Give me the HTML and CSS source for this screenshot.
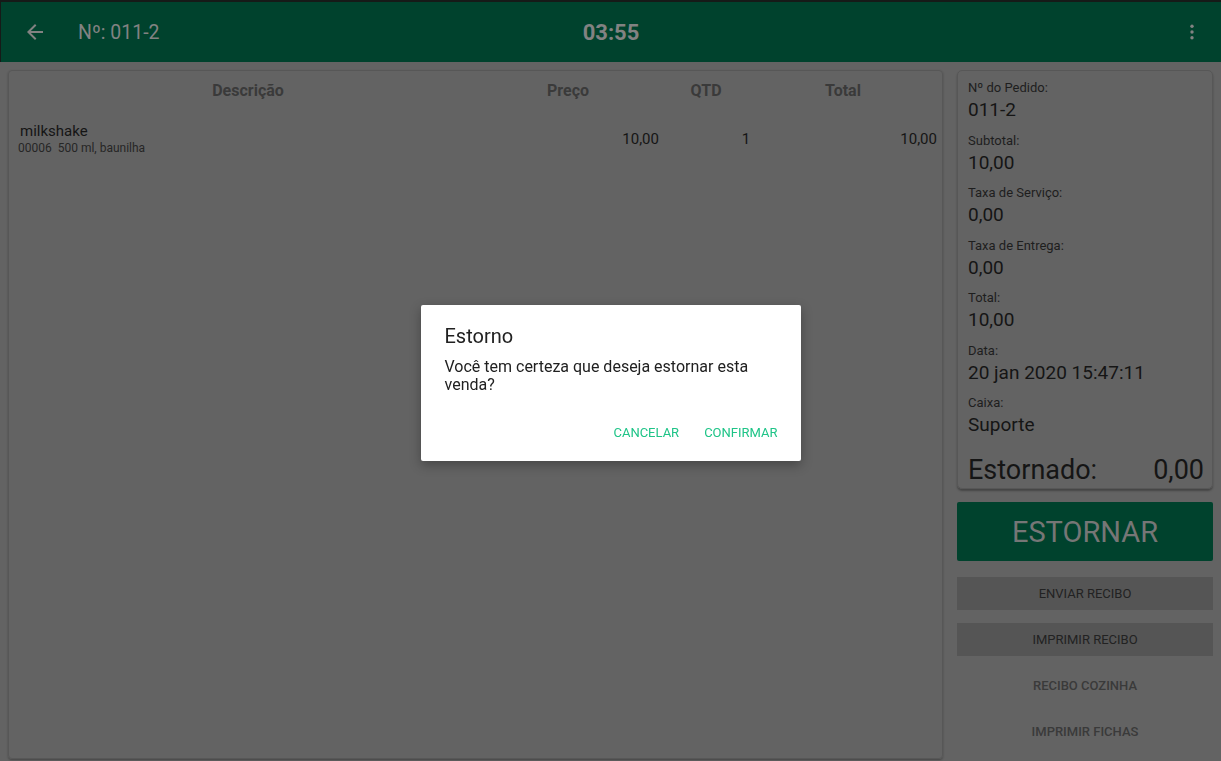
FILE: index.html
```html
<!DOCTYPE html>
<html lang="pt-BR">

<head>
  <meta charset="UTF-8">
  <meta name="viewport" content="width=device-width, initial-scale=1.0">
  <title>Pedido 011-2</title>
  <link rel="stylesheet" href="styles.css">
</head>

<body>
  <header class="topbar">
    <div class="topbar_left">
      <svg class="back_icon" width="24" height="24" viewBox="0 0 24 24">
        <path d="M20 11H7.83l5.59-5.59L12 4l-8 8 8 8 1.41-1.41L7.83 13H20v-2z" />
      </svg>
      <div class="order_title">Nº: 011-2</div>
    </div>
    <div class="timer">03:55</div>
    <div class="topbar_right">
      <svg class="menu_icon" width="24" height="24" viewBox="0 0 24 24">
        <circle cx="12" cy="6.3" r="1.7" />
        <circle cx="12" cy="12" r="1.7" />
        <circle cx="12" cy="17.7" r="1.7" />
      </svg>
    </div>
  </header>

  <main class="content">
    <section class="items_card">
      <div class="items_head">
        <div>Descrição</div>
        <div>Preço</div>
        <div>QTD</div>
        <div>Total</div>
      </div>
      <div class="item_row">
        <div class="item_desc">
          <div class="item_name">milkshake</div>
          <div class="item_info">00006&nbsp; 500 ml, baunilha</div>
        </div>
        <div class="item_price">10,00</div>
        <div class="item_qtd">1</div>
        <div class="item_total">10,00</div>
      </div>
    </section>

    <aside class="side">
      <div class="summary_card">
        <div class="field">
          <div class="field_label">Nº do Pedido:</div>
          <div class="field_value">011-2</div>
        </div>
        <div class="field">
          <div class="field_label">Subtotal:</div>
          <div class="field_value">10,00</div>
        </div>
        <div class="field">
          <div class="field_label">Taxa de Serviço:</div>
          <div class="field_value">0,00</div>
        </div>
        <div class="field">
          <div class="field_label">Taxa de Entrega:</div>
          <div class="field_value">0,00</div>
        </div>
        <div class="field">
          <div class="field_label">Total:</div>
          <div class="field_value">10,00</div>
        </div>
        <div class="field">
          <div class="field_label">Data:</div>
          <div class="field_value">20 jan 2020 15:47:11</div>
        </div>
        <div class="field">
          <div class="field_label">Caixa:</div>
          <div class="field_value">Suporte</div>
        </div>
        <div class="refunded">
          <span>Estornado:</span>
          <span>0,00</span>
        </div>
      </div>

      <button type="button" class="refund_btn">ESTORNAR</button>
      <button type="button" class="action_btn">ENVIAR RECIBO</button>
      <button type="button" class="action_btn">IMPRIMIR RECIBO</button>
      <button type="button" class="action_btn flat">RECIBO COZINHA</button>
      <button type="button" class="action_btn flat">IMPRIMIR FICHAS</button>
    </aside>
  </main>

  <div class="overlay">
    <div class="dialog">
      <div class="dialog_title">Estorno</div>
      <div class="dialog_text">Você tem certeza que deseja estornar esta venda?</div>
      <div class="dialog_btns">
        <button type="button" class="dialog_btn">CANCELAR</button>
        <button type="button" class="dialog_btn">CONFIRMAR</button>
      </div>
    </div>
  </div>
</body>

</html>
```

FILE: styles.css
```css
* {
  box-sizing: border-box;
}

body {
  width: 1221px;
  height: 761px;
  margin: 0;
  overflow: hidden;

  font-family: Roboto, "Noto Sans", sans-serif;
  background-color: #636363;
}

button {
  font-family: inherit;
  border: none;
  cursor: pointer;
}

/* top bar */
.topbar {
  height: 62px;

  display: grid;
  grid-template-columns: 1fr auto 1fr;
  align-items: center;

  background-color: #00422d;
  border-top: 2px solid #161a18;
  border-left: 1px solid #161a18;
}

.topbar_left {
  display: flex;
  align-items: center;
  padding-left: 22px;
}

.back_icon {
  fill: #828282;
}

.order_title {
  margin-left: 31px;
  font-size: 19.5px;
  color: #828282;
}

.timer {
  font-size: 22px;
  font-weight: 700;
  color: #828282;
}

.topbar_right {
  display: flex;
  justify-content: flex-end;
  padding-right: 17px;
}

.menu_icon {
  fill: #828282;
}

/* page body */
.content {
  height: 699px;

  display: flex;
  gap: 14px;
  padding: 8px 8px 0 8px;
}

.items_card {
  flex: 1;
  height: 689px;

  border: 1px solid #575757;
  border-radius: 4px;
  box-shadow: 0 1px 2px rgba(0, 0, 0, 0.3);
}

.items_head {
  height: 38px;

  display: grid;
  grid-template-columns: 478px 162px 114px 160px;
  align-items: center;
  text-align: center;

  font-size: 16px;
  font-weight: 700;
  color: #3a3a3a;
}

.item_row {
  height: 50px;
  margin-top: 5px;

  display: grid;
  grid-template-columns: 1fr 100px 174px 104px;
  align-items: center;

  padding: 0 5px 0 11px;
  font-size: 15px;
  color: #151515;
}

.item_name {
  line-height: 18px;
}

.item_info {
  margin-left: -2px;
  font-size: 12px;
  line-height: 16px;
  color: #262626;
}

.item_price,
.item_total {
  text-align: right;
}

.item_qtd {
  text-align: center;
}

/* right column */
.side {
  width: 256px;

  display: flex;
  flex-direction: column;
}

.summary_card {
  padding: 9px 10px 2px 10px;

  border: 1px solid #575757;
  border-radius: 5px;
  box-shadow: 0 2px 2px rgba(0, 0, 0, 0.3);
}

.field {
  margin-bottom: 10.5px;
}

.field_label {
  font-size: 13px;
  line-height: 16px;
  color: #1e1e1e;
}

.field_value {
  margin-top: 2px;
  font-size: 19px;
  line-height: 24px;
  color: #151515;
}

/* margin collapses with the last field's margin-bottom */
.refunded {
  display: flex;
  justify-content: space-between;

  margin-top: 17px;
  margin-right: -2px;
  font-size: 27px;
  line-height: 32px;
  color: #151515;
}

.refund_btn {
  height: 59px;
  margin-top: 13px;

  font-size: 29px;
  color: #767676;
  background-color: #00422d;
  border-radius: 2px;
}

.action_btn {
  height: 33px;
  margin-top: 13px;

  font-size: 13px;
  color: #222222;
  background-color: #555555;
}

.refund_btn + .action_btn {
  margin-top: 16px;
}

.flat {
  font-weight: 500;
  color: #3a3a3a;
  background-color: transparent;
}

/* confirm dialog */
.overlay {
  position: fixed;
  inset: 0;

  display: flex;
  justify-content: center;
  align-items: center;
  padding-top: 5px;
}

.dialog {
  width: 380px;
  padding: 19px 15px 11px 24px;

  background-color: white;
  border-radius: 2px;
  box-shadow: 0 4px 12px rgba(0, 0, 0, 0.3);
}

.dialog_title {
  font-size: 20px;
  line-height: 24px;
  color: #212121;
}

.dialog_text {
  margin-top: 10px;
  padding-right: 9px;

  font-size: 16px;
  line-height: 18px;
  color: #212121;
}

.dialog_btns {
  display: flex;
  justify-content: flex-end;
  gap: 9px;
  margin-top: 20px;
}

.dialog_btn {
  height: 36px;
  padding: 0 8px;

  font-size: 13px;
  color: #1ec487;
  background-color: transparent;
}
```
